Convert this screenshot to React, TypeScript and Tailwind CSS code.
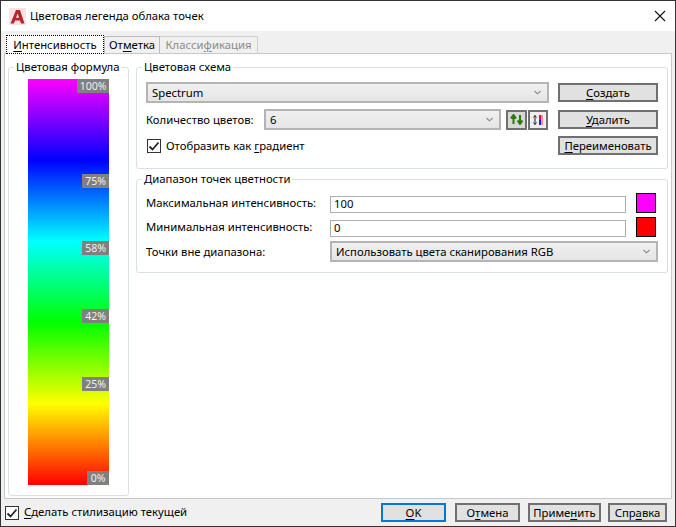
import { ReactNode } from 'react';

function Mn({ children }: { children: ReactNode }) {
    return <span className="underline underline-offset-2 decoration-1">{children}</span>;
}

function Chevron() {
    return (
        <svg width="7" height="5" viewBox="0 0 7 5" className="shrink-0">
            <path d="M0.5 1 L3.5 3.8 L6.5 1" fill="none" stroke="#888" strokeWidth="1.1" />
        </svg>
    );
}

function Combo({ value, className }: { value: string; className: string }) {
    return (
        <div className={`flex items-center justify-between border-2 border-[#b4b4b4] bg-gradient-to-b from-[#f0f0f0] to-[#e5e5e5] pl-1 pr-[6px] ${className}`}>
            <span className="pt-px">{value}</span>
            <Chevron />
        </div>
    );
}

function Btn({ children, className }: { children: ReactNode; className: string }) {
    return (
        <div className={`flex items-center justify-center border-2 border-[#707070] bg-[#e1e1e1] pt-px ${className}`}>
            {children}
        </div>
    );
}

function Check() {
    return (
        <div className="flex h-[14px] w-[14px] shrink-0 items-center justify-center border border-[#333] bg-white">
            <svg width="12" height="12" viewBox="0 0 12 12">
                <path d="M1.5 6.5 L4.5 9.5 L10.5 2.5" fill="none" stroke="#222" strokeWidth="1.8" />
            </svg>
        </div>
    );
}

function Group({ title, className, children }: { title: string; className: string; children: ReactNode }) {
    return (
        <div className={`relative rounded-[3px] border border-[#d9e0e6] ${className}`}>
            <span className="absolute -top-[9px] left-[5px] whitespace-nowrap bg-white px-[2px] leading-[16px]">{title}</span>
            {children}
        </div>
    );
}

function Tick({ label, className }: { label: string; className: string }) {
    return (
        <div className={`absolute right-0 flex h-[14px] items-center justify-center bg-[#808080] pt-[2px] text-[10.5px] text-[#f0f0f0] ${className}`}>
            {label}
        </div>
    );
}

export default function App() {
    return (
        <div
            className="flex h-[527px] w-[676px] flex-col overflow-hidden border border-[#333] bg-[#f0f0f0] text-[11.3px] text-black"
            style={{ fontFamily: '"Noto Sans", sans-serif' }}
        >
            <div className="flex h-[30px] shrink-0 items-center bg-white pl-[8px] pr-[9px]">
                <svg width="17" height="17" viewBox="0 0 17 17" className="shrink-0">
                    <rect width="17" height="17" fill="#f7e3e1" />
                    <path d="M1.5 15.5 L7 2 H11 L15.5 15.5 H12 L11 12.5 H6 L5 15.5 Z M7 9.8 H10 L8.6 5.5 Z" fill="#b8252c" fillRule="evenodd" />
                </svg>
                <span className="ml-[4px] flex-1">Цветовая легенда облака точек</span>
                <svg width="12" height="12" viewBox="0 0 12 12">
                    <path d="M1 1 L11 11 M11 1 L1 11" stroke="#111" strokeWidth="1.1" />
                </svg>
            </div>

            <div className="flex h-[22px] shrink-0 items-end pl-[5px]">
                <div className="relative z-10 -mb-px flex h-[19px] w-[98px] items-center justify-center border border-dotted border-black bg-white pt-px">
                    <span><Mn>И</Mn>нтенсивность</span>
                </div>
                <div className="flex h-[17px] w-[56px] items-center justify-center border border-b-0 border-[#bbb] bg-[#f0f0f0] pt-px">
                    <span>От<Mn>м</Mn>етка</span>
                </div>
                <div className="flex h-[17px] w-[98px] items-center justify-center border border-b-0 border-l-0 border-[#d0d0d0] pt-px text-[#8a8a8a]">
                    <span>Класси<Mn>ф</Mn>икация</span>
                </div>
            </div>

            <div className="mx-[3px] flex h-[446px] shrink-0 gap-[7px] border border-[#c8c8c8] bg-white pl-[3px] pr-[3px] pt-[13px]">
                <Group title="Цветовая формула" className="h-[429px] w-[121px] shrink-0 px-[19px] pt-[11px]">
                    <div className="relative h-[406px] w-[81px]"
                        style={{ backgroundImage: 'linear-gradient(to bottom, #f0f 0%, #00f 20%, #0ff 40%, #0f0 60%, #ff0 80%, #f00 100%)' }}>
                        <Tick label="100%" className="top-0 w-[32px]" />
                        <Tick label="75%" className="top-[95px] w-[27px]" />
                        <Tick label="58%" className="top-[162px] w-[27px]" />
                        <Tick label="42%" className="top-[230px] w-[27px]" />
                        <Tick label="25%" className="top-[298px] w-[27px]" />
                        <Tick label="0%" className="bottom-0 w-[22px]" />
                    </div>
                </Group>

                <div className="flex flex-1 flex-col gap-[10px]">
                    <Group title="Цветовая схема" className="flex h-[102px] gap-[9px] pl-[9px] pr-[8px] pt-[14px]">
                        <div className="flex w-[403px] flex-col">
                            <Combo value="Spectrum" className="h-[21px]" />
                            <div className="mt-[6px] flex h-[21px] items-center">
                                <span className="w-[118px] pt-px">Количество цветов:</span>
                                <Combo value="6" className="h-[21px] w-[237px]" />
                                <div className="ml-[5px] flex h-[20px] w-[21px] items-center justify-center border-2 border-[#707070] bg-[#d8d8d8]">
                                    <svg width="14" height="11" viewBox="0 0 14 11">
                                        <path d="M3.5 10 V2 M1 4.5 L3.5 1 L6 4.5 M10 1 V9 M7.5 6.5 L10 10 L12.5 6.5" fill="none" stroke="#2a7a0c" strokeWidth="2" />
                                    </svg>
                                </div>
                                <div className="ml-[1px] flex h-[20px] w-[20px] items-center justify-center border-2 border-[#707070] bg-[#eeeeee]">
                                    <svg width="14" height="12" viewBox="0 0 14 12">
                                        <path d="M4 1.5 V10.5 M2.5 3.5 L4 1.5 L5.5 3.5 M2.5 8.5 L4 10.5 L5.5 8.5" fill="none" stroke="#222" strokeWidth="1" />
                                        <rect x="8" y="1" width="2" height="5" fill="#e0103a" />
                                        <rect x="8" y="6" width="2" height="5" fill="#2020e0" />
                                        <rect x="10" y="1" width="2" height="10" fill="#f090a0" />
                                    </svg>
                                </div>
                            </div>
                            <div className="mt-[8px] flex items-center gap-[5px] pl-px">
                                <Check />
                                <span>Отобразить как <Mn>г</Mn>радиент</span>
                            </div>
                        </div>
                        <div className="flex w-[100px] flex-col pt-px">
                            <Btn className="h-[19px]"><span><Mn>С</Mn>оздать</span></Btn>
                            <Btn className="mt-[8px] h-[19px]"><span><Mn>У</Mn>далить</span></Btn>
                            <Btn className="mt-[7px] h-[19px]"><span><Mn>П</Mn>ереименовать</span></Btn>
                        </div>
                    </Group>

                    <Group title="Диапазон точек цветности" className="flex h-[94px] flex-col pl-[9px] pr-[8px] pt-[13px]">
                        <div className="flex h-[20px] items-center">
                            <span className="w-[184px] pt-px">Максимальная интенсивность:</span>
                            <div className="mt-[2px] flex h-[17px] w-[296px] items-center border border-[#adadad] pl-[3px]">100</div>
                            <div className="ml-[10px] h-[20px] w-[20px] border border-black bg-[#ff00ff]" />
                        </div>
                        <div className="mt-[4px] flex h-[20px] items-center">
                            <span className="w-[184px] pt-px">Минимальная интенсивность:</span>
                            <div className="mt-[2px] flex h-[17px] w-[296px] items-center border border-[#adadad] pl-[3px]">0</div>
                            <div className="ml-[10px] h-[20px] w-[20px] border border-black bg-[#ff0000]" />
                        </div>
                        <div className="mt-[4px] flex h-[21px] items-center">
                            <span className="w-[184px] pt-px">Точки вне диапазона:</span>
                            <Combo value="Использовать цвета сканирования RGB" className="h-[21px] w-[328px]" />
                        </div>
                    </Group>
                </div>
            </div>

            <div className="flex flex-1 items-center pl-[4px] pr-[8px]">
                <Check />
                <span className="ml-[5px] flex-1"><Mn>С</Mn>делать стилизацию текущей</span>
                <Btn className="h-[19px] w-[65px] !border-[#0078d7]"><span><Mn>O</Mn>K</span></Btn>
                <Btn className="ml-[9px] h-[19px] w-[65px]"><span>О<Mn>т</Mn>мена</span></Btn>
                <Btn className="ml-[8px] h-[19px] w-[73px]"><span>Приме<Mn>н</Mn>ить</span></Btn>
                <Btn className="ml-[7px] h-[19px] w-[59px]"><span>Спр<Mn>а</Mn>вка</span></Btn>
            </div>
        </div>
    );
}
